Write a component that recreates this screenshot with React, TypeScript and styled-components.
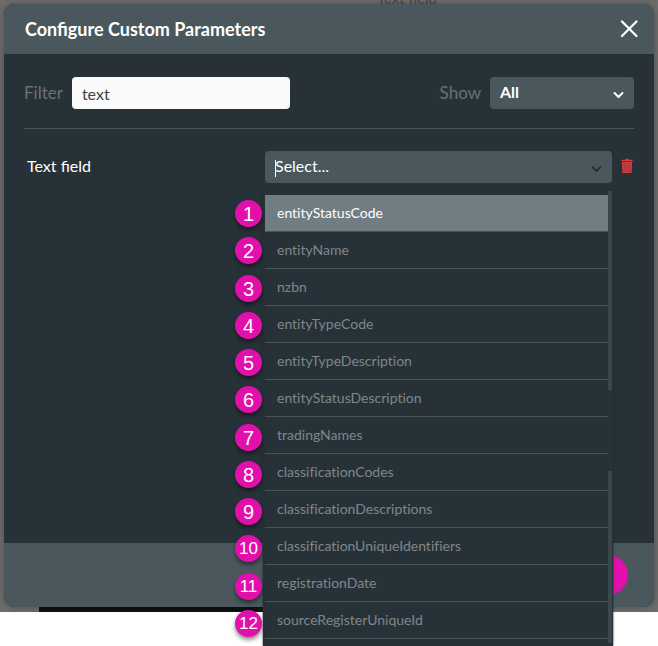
import React from "react";
import styled, { createGlobalStyle } from "styled-components";

const GlobalStyle = createGlobalStyle`
  * { box-sizing: border-box; }
  body {
    margin: 0;
    background: #ffffff;
    font-family: Lato, "Open Sans", sans-serif;
    color: #ffffff;
  }
  input, select, button { font-family: inherit; }
`;

const Page = styled.div`
  min-height: 100vh;
`;

const Backdrop = styled.div`
  position: relative;
  display: flex;
  height: calc(100vh - 34px);
  min-height: 480px;
  padding: 4px 4px 5px;
  background: #6d6c6b;
`;

const PageHeading = styled.div`
  position: absolute;
  top: -12px;
  left: 377px;
  font-size: 15px;
  line-height: 20px;
  color: #49494b;
`;

const PageFooterStrip = styled.div`
  position: absolute;
  bottom: 0;
  left: 39px;
  right: 45px;
  height: 6px;
  background: #0d1215;
`;

const Dialog = styled.section`
  position: relative;
  flex: 1;
  min-width: 0;
  display: flex;
  flex-direction: column;
  border-radius: 11px;
  background: #273238;
  box-shadow: 0 0 6px rgba(0, 0, 0, 0.3);
`;

const Header = styled.header`
  display: flex;
  align-items: center;
  justify-content: space-between;
  height: 50px;
  padding: 0 16px 0 21px;
  border-radius: 11px 11px 0 0;
  background: #4a585e;
`;

const Title = styled.h1`
  margin: 0;
  font-size: 18px;
  line-height: 24px;
  font-weight: 700;
`;

const IconButton = styled.button`
  display: flex;
  padding: 0;
  border: 0;
  background: none;
  color: inherit;
  cursor: pointer;
`;

const Body = styled.div`
  flex: 1;
  padding: 23px 20px;
`;

const Toolbar = styled.div`
  display: flex;
  align-items: center;
  justify-content: space-between;
  padding-bottom: 19px;
  border-bottom: 1px solid #4a585e;
`;

const Field = styled.div`
  display: flex;
  align-items: center;
  gap: 9px;
`;

const FieldLabel = styled.label`
  font-size: 17px;
  line-height: 24px;
  color: #6c7174;
`;

const FilterInput = styled.input`
  width: 218px;
  height: 32px;
  padding: 0 10px;
  border: 0;
  border-radius: 4px;
  background: #fafafa;
  color: #3a444a;
  font-size: 16px;
`;

const SelectBox = styled.div`
  position: relative;
  display: flex;
  border-radius: 4px;
  background: #4a585e;
`;

const ShowSelect = styled.select`
  appearance: none;
  width: 144px;
  height: 32px;
  padding: 0 10px 3px;
  border: 0;
  background: none;
  color: #ffffff;
  font-size: 16px;
  font-weight: 700;
`;

const Chevron = styled.svg<{ $muted?: boolean }>`
  position: absolute;
  top: 14px;
  right: 10px;
  width: 11px;
  height: 8px;
  pointer-events: none;
  fill: none;
  stroke: ${(p) => (p.$muted ? "#273238" : "#ffffff")};
  stroke-width: 2;
  stroke-linecap: round;
  stroke-linejoin: round;
`;

const ParameterRow = styled.div`
  display: grid;
  grid-template-columns: 241px 1fr 22px;
  align-items: center;
  margin-top: 22px;
`;

const ParameterLabel = styled.label`
  padding: 0 0 2px 3px;
  font-size: 16px;
  line-height: 20px;
`;

const ComboInput = styled.input`
  flex: 1;
  min-width: 0;
  height: 32px;
  padding: 0 10px 3px;
  border: 0;
  background: none;
  color: #ffffff;
  font-size: 16px;
  &::placeholder { color: #ffffff; opacity: 1; }
`;

const Caret = styled.span`
  position: absolute;
  top: 9px;
  left: 10px;
  width: 1px;
  height: 17px;
  background: #ffffff;
`;

const DeleteButton = styled(IconButton)`
  justify-self: end;
  padding: 0 1px 2px 0;
  color: #d8403f;
`;

const Menu = styled.div`
  position: absolute;
  z-index: 1;
  top: 39px;
  left: -2px;
  right: -1px;
  padding: 5px 5px 7px 2px;
  background: #273238;
  box-shadow: 0 0 2px #1c262b;
`;

const OptionList = styled.ul`
  margin: 0;
  padding: 0;
  list-style: none;
`;

const Option = styled.li<{ $active?: boolean }>`
  height: 37px;
  padding: 0 12px;
  border-bottom: 1px solid #46535a;
  background: ${(p) => (p.$active ? "#707d82" : "transparent")};
  color: ${(p) => (p.$active ? "#ffffff" : "#7f868a")};
  font-size: 14px;
  line-height: 36px;
  font-variant-ligatures: none;
`;

const ScrollTrack = styled.div`
  position: absolute;
  top: 1px;
  bottom: 3px;
  right: 1px;
  width: 4px;
  display: flex;
  flex-direction: column;
  justify-content: space-between;
`;

const ScrollPiece = styled.span<{ $share: number }>`
  height: ${(p) => p.$share}%;
  background: #3a474d;
`;

const Markers = styled.ol`
  position: absolute;
  top: 10px;
  bottom: 9px;
  left: -28px;
  display: flex;
  flex-direction: column;
  justify-content: space-between;
  margin: 0;
  padding: 0;
  list-style: none;
`;

const Marker = styled.li<{ $wide?: boolean }>`
  width: 27px;
  height: 27px;
  border-radius: 50%;
  background: #e210ab;
  box-shadow: 0 3px 4px rgba(0, 0, 0, 0.45);
  font-family: "Liberation Sans", Arial, sans-serif;
  font-size: ${(p) => (p.$wide ? 17 : 20)}px;
  line-height: 28px;
  text-align: center;
`;

const Footer = styled.footer`
  display: flex;
  align-items: center;
  justify-content: flex-end;
  height: 64px;
  padding: 0 26px;
  border-radius: 0 0 11px 11px;
  background: #4a585e;
`;

const SaveButton = styled.button`
  width: 110px;
  height: 40px;
  border: 0;
  border-radius: 20px;
  background: #e210ab;
`;

const OPTIONS = [
  "entityStatusCode",
  "entityName",
  "nzbn",
  "entityTypeCode",
  "entityTypeDescription",
  "entityStatusDescription",
  "tradingNames",
  "classificationCodes",
  "classificationDescriptions",
  "classificationUniqueIdentifiers",
  "registrationDate",
  "sourceRegisterUniqueId",
];

const ChevronIcon = ({ muted }: { muted?: boolean }) => (
  <Chevron $muted={muted} viewBox="0 0 11 8" aria-hidden="true">
    <path d="M1.5 2 5.5 6 9.5 2" />
  </Chevron>
);

const CloseIcon = () => (
  <svg width="18" height="18" viewBox="0 0 18 18" aria-hidden="true">
    <path d="M2 1.5 16.5 16M16.5 1.5 2 16" stroke="currentColor" strokeWidth="2.2" strokeLinecap="round" />
  </svg>
);

const TrashIcon = () => (
  <svg width="12" height="16" viewBox="0 0 12 16" fill="none" stroke="currentColor" aria-hidden="true">
    <path d="M4 1.3h4" />
    <path d="M0.3 2.4h11.4" strokeWidth="1.2" />
    <path d="M1.6 4.4 2.1 14.4h7.8L10.4 4.4Z" fill="#a63c40" strokeWidth="1.3" />
    <path d="M4.3 5.5v7.5M6 5.5v7.5M7.7 5.5v7.5" strokeWidth="0.6" />
  </svg>
);

export default function App() {
  return (
    <Page>
      <GlobalStyle />
      <Backdrop>
        <PageHeading>Text field</PageHeading>
        <PageFooterStrip />
        <Dialog role="dialog" aria-labelledby="dialog-title">
          <Header>
            <Title id="dialog-title">Configure Custom Parameters</Title>
            <IconButton type="button" aria-label="Close">
              <CloseIcon />
            </IconButton>
          </Header>
          <Body>
            <Toolbar>
              <Field>
                <FieldLabel htmlFor="filter">Filter</FieldLabel>
                <FilterInput id="filter" type="text" defaultValue="text" />
              </Field>
              <Field>
                <FieldLabel htmlFor="show">Show</FieldLabel>
                <SelectBox>
                  <ShowSelect id="show" defaultValue="all">
                    <option value="all">All</option>
                  </ShowSelect>
                  <ChevronIcon />
                </SelectBox>
              </Field>
            </Toolbar>
            <ParameterRow>
              <ParameterLabel htmlFor="text-field">Text field</ParameterLabel>
              <SelectBox>
                <ComboInput
                  id="text-field"
                  type="text"
                  role="combobox"
                  aria-expanded="true"
                  aria-controls="text-field-options"
                  placeholder="Select..."
                />
                <Caret />
                <ChevronIcon muted />
                <Menu>
                  <OptionList id="text-field-options" role="listbox">
                    {OPTIONS.map((name, i) => (
                      <Option key={name} role="option" aria-selected={i === 0} $active={i === 0}>
                        {name}
                      </Option>
                    ))}
                  </OptionList>
                  <ScrollTrack>
                    <ScrollPiece $share={44} />
                    <ScrollPiece $share={38} />
                  </ScrollTrack>
                  <Markers>
                    {OPTIONS.map((name, i) => (
                      <Marker key={name} $wide={i > 8}>
                        {i + 1}
                      </Marker>
                    ))}
                  </Markers>
                </Menu>
              </SelectBox>
              <DeleteButton type="button" aria-label="Delete parameter">
                <TrashIcon />
              </DeleteButton>
            </ParameterRow>
          </Body>
          <Footer>
            <SaveButton type="button" aria-label="Save" />
          </Footer>
        </Dialog>
      </Backdrop>
    </Page>
  );
}
